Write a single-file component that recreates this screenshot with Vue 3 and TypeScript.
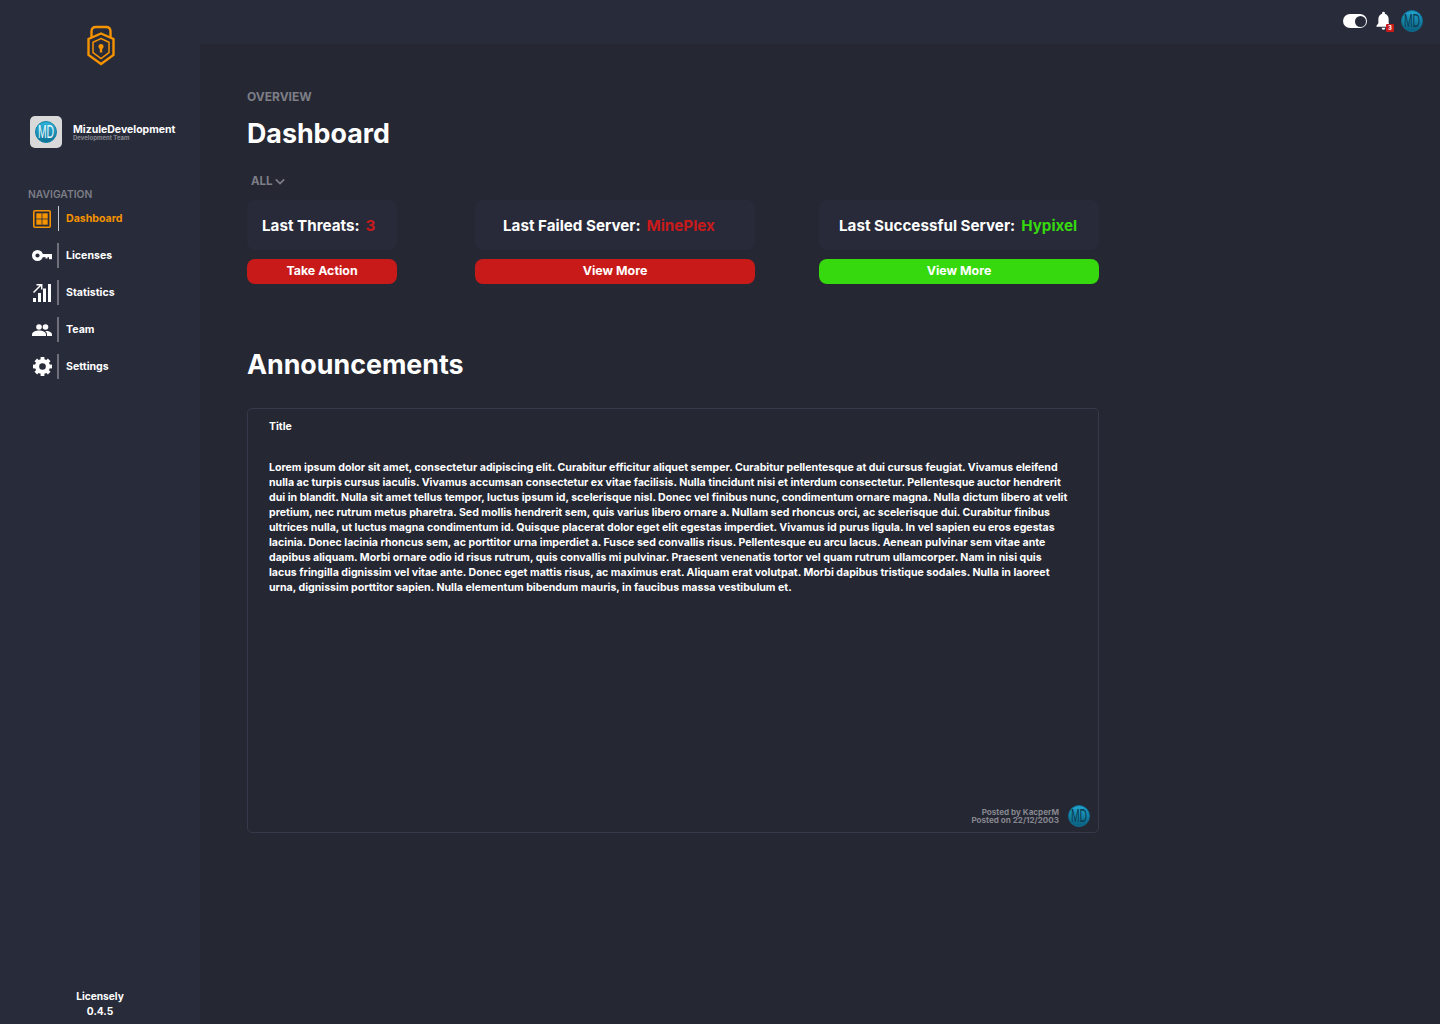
<script setup lang="ts">
interface NavItem {
  label: string
  icon: string
  active?: boolean
}

const navItems: NavItem[] = [
  { label: 'Dashboard', icon: 'grid', active: true },
  { label: 'Licenses', icon: 'key' },
  { label: 'Statistics', icon: 'stats' },
  { label: 'Team', icon: 'team' },
  { label: 'Settings', icon: 'gear' },
]

const stats = [
  { label: 'Last Threats:', value: '3', action: 'Take Action', tone: 'red', width: 150, inset: 15 },
  { label: 'Last Failed Server:', value: 'MinePlex', action: 'View More', tone: 'red', width: 280, inset: 28 },
  { label: 'Last Successful Server:', value: 'Hypixel', action: 'View More', tone: 'green', width: 280, inset: 20 },
]

const gearTeeth = [0, 45, 90, 135, 180, 225, 270, 315]

const loremLines = [
  'Lorem ipsum dolor sit amet, consectetur adipiscing elit. Curabitur efficitur aliquet semper. Curabitur pellentesque at dui cursus feugiat. Vivamus eleifend',
  'nulla ac turpis cursus iaculis. Vivamus accumsan consectetur ex vitae facilisis. Nulla tincidunt nisi et interdum consectetur. Pellentesque auctor hendrerit',
  'dui in blandit. Nulla sit amet tellus tempor, luctus ipsum id, scelerisque nisl. Donec vel finibus nunc, condimentum ornare magna. Nulla dictum libero at velit',
  'pretium, nec rutrum metus pharetra. Sed mollis hendrerit sem, quis varius libero ornare a. Nullam sed rhoncus orci, ac scelerisque dui. Curabitur finibus',
  'ultrices nulla, ut luctus magna condimentum id. Quisque placerat dolor eget elit egestas imperdiet. Vivamus id purus ligula. In vel sapien eu eros egestas',
  'lacinia. Donec lacinia rhoncus sem, ac porttitor urna imperdiet a. Fusce sed convallis risus. Pellentesque eu arcu lacus. Aenean pulvinar sem vitae ante',
  'dapibus aliquam. Morbi ornare odio id risus rutrum, quis convallis mi pulvinar. Praesent venenatis tortor vel quam rutrum ullamcorper. Nam in nisi quis',
  'lacus fringilla dignissim vel vitae ante. Donec eget mattis risus, ac maximus erat. Aliquam erat volutpat. Morbi dapibus tristique sodales. Nulla in laoreet',
  'urna, dignissim porttitor sapien. Nulla elementum bibendum mauris, in faucibus massa vestibulum et.',
]
</script>

<template>
  <div class="shell">
    <aside class="sidebar">
      <div class="logo-wrap">
        <svg class="logo" viewBox="0 0 28 40" fill="none" stroke="#f59300" stroke-width="2.400">
          <path d="M4.500 12V6Q4.500 1.500 9 1.500h10Q23.500 1.500 23.500 6V12" />
          <path d="M14 8 26.500 13.500V29.500L14 38.500 1.500 29.500V13.500Z" />
          <path d="M14 13 22 16.800V27L14 33 6 27V16.800Z" stroke-width="1.500" />
          <circle cx="14" cy="21" r="2.500" fill="#f59300" stroke="none" />
          <rect x="12.800" y="21.500" width="2.400" height="5.500" fill="#f59300" stroke="none" />
        </svg>
      </div>

      <div class="team">
        <div class="team-avatar">
          <svg class="md md-team" viewBox="0 0 22 22">
            <defs>
              <linearGradient id="mdTeam" x1="0" y1="0" x2="0" y2="1">
                <stop offset="0" stop-color="#2fb4dc" />
                <stop offset="1" stop-color="#0c6f92" />
              </linearGradient>
            </defs>
            <circle cx="11" cy="11" r="10.500" fill="url(#mdTeam)" stroke="#1483a8" />
            <text transform="translate(11 17.300) scale(.8 1.35)" text-anchor="middle" class="md-text">MD</text>
          </svg>
        </div>
        <div>
          <div class="team-name">MizuleDevelopment</div>
          <div class="team-sub">Development Team</div>
        </div>
      </div>

      <div class="nav-title">NAVIGATION</div>
      <nav class="nav">
        <a v-for="item in navItems" :key="item.label" class="nav-item" :class="{ active: item.active }">
          <span class="nav-icon">
            <svg v-if="item.icon === 'grid'" viewBox="0 0 18 18" width="18" height="18">
              <rect x=".8" y=".8" width="16.400" height="16.400" rx="1" fill="none" stroke="#f59300" stroke-width="1.600" />
              <rect x="3.300" y="3.300" width="5.300" height="5.300" fill="#f59300" />
              <rect x="9.400" y="3.300" width="5.300" height="5.300" fill="#f59300" />
              <rect x="3.300" y="9.400" width="5.300" height="5.300" fill="#f59300" />
              <rect x="9.400" y="9.400" width="5.300" height="5.300" fill="#f59300" />
            </svg>
            <svg v-else-if="item.icon === 'key'" viewBox="0 0 20 11" width="20" height="11">
              <circle cx="5.500" cy="5.500" r="3.800" fill="none" stroke="#fff" stroke-width="3.400" />
              <rect x="9" y="4" width="11" height="3.200" fill="#fff" />
              <rect x="13.500" y="6" width="2" height="2.500" fill="#fff" />
              <rect x="17" y="6" width="3" height="3.200" fill="#fff" />
            </svg>
            <svg v-else-if="item.icon === 'stats'" viewBox="0 0 18 18" width="18" height="18">
              <rect x="0" y="14" width="3" height="4" fill="#fff" />
              <rect x="5" y="9" width="3" height="9" fill="#fff" />
              <rect x="10" y="4.500" width="3" height="13.500" fill="#fff" />
              <rect x="15" y="0" width="3" height="18" fill="#fff" />
              <path d="M.5 8.500 8 1M3.500 .8H8.700V5.500" stroke="#fff" stroke-width="1.500" fill="none" />
            </svg>
            <svg v-else-if="item.icon === 'team'" viewBox="0 0 20 12" width="20" height="12">
              <circle cx="7" cy="3" r="2.800" fill="#fff" />
              <circle cx="13.500" cy="3" r="2.800" fill="#fff" />
              <path fill="#fff" d="M0 12v-1.500C0 8 4 6.600 7 6.600s7 1.400 7 3.900V12Z" />
              <path fill="#fff" d="M15 12v-1.500c0-1.500-.7-2.700-1.900-3.500 .4 0 .8-.1 1.200-.1 2.800 0 5.700 1.300 5.700 3.600V12Z" />
            </svg>
            <svg v-else viewBox="0 0 20 20" width="19" height="19">
              <circle cx="10" cy="10" r="5.700" fill="none" stroke="#fff" stroke-width="4.400" />
              <rect
                v-for="angle in gearTeeth"
                :key="angle"
                x="8"
                y="0"
                width="4"
                height="4"
                fill="#fff"
                :transform="`rotate(${angle} 10 10)`"
              />
            </svg>
          </span>
          <span class="nav-rule" />
          <span class="nav-label">{{ item.label }}</span>
        </a>
      </nav>

      <div class="version">
        <div>Licensely</div>
        <div>0.4.5</div>
      </div>
    </aside>

    <div class="column">
      <header class="topbar">
        <span class="toggle"><span class="knob" /></span>
        <span class="bell">
          <svg viewBox="0 0 16 20" width="15" height="20">
            <path fill="#fff" d="M8 0a1.500 1.500 0 0 1 1.500 1.500v.8C12 3 13.500 5.200 13.500 8v4.500L15.500 15v1H.5v-1l2-2.500V8c0-2.800 1.500-5 4-5.700v-.8A1.500 1.500 0 0 1 8 0Z" />
            <path fill="#fff" d="M6 17.300h4a2 2 0 0 1-4 0Z" />
          </svg>
          <span class="bell-badge">3</span>
        </span>
        <svg class="md md-top" viewBox="0 0 22 22">
          <defs>
            <linearGradient id="mdTop" x1="0" y1="0" x2="0" y2="1">
              <stop offset="0" stop-color="#22a6d1" />
              <stop offset="1" stop-color="#0a5d7c" />
            </linearGradient>
          </defs>
          <circle cx="11" cy="11" r="10.500" fill="url(#mdTop)" stroke="#0d6f93" />
          <text transform="translate(11 17.300) scale(.8 1.35)" text-anchor="middle" class="md-text dark">MD</text>
        </svg>
      </header>

      <main class="main">
        <div class="eyebrow">OVERVIEW</div>
        <h1 class="heading">Dashboard</h1>

        <div class="filter">
          ALL
          <svg viewBox="0 0 12 8" width="10" height="7" fill="none" stroke="#7d7e86" stroke-width="2">
            <path d="M1 1.500 6 6.500 11 1.500" />
          </svg>
        </div>

        <section class="stats">
          <div v-for="stat in stats" :key="stat.label" class="stat" :style="{ width: stat.width + 'px' }">
            <div class="stat-card" :style="{ paddingLeft: stat.inset + 'px' }">
              <span class="stat-label">{{ stat.label }}</span>
              <span class="stat-value" :class="stat.tone">{{ stat.value }}</span>
            </div>
            <button class="stat-btn" :class="stat.tone">{{ stat.action }}</button>
          </div>
        </section>

        <h2 class="heading announce">Announcements</h2>

        <article class="panel">
          <div class="panel-title">Title</div>
          <p class="panel-body">
            <span v-for="line in loremLines" :key="line" class="line">{{ line }}</span>
          </p>
          <footer class="panel-foot">
            <div class="posted">
              <div>Posted by KacperM</div>
              <div>Posted on 22/12/2003</div>
            </div>
            <svg class="md md-foot" viewBox="0 0 22 22">
              <defs>
                <linearGradient id="mdFoot" x1="0" y1="0" x2="0" y2="1">
                  <stop offset="0" stop-color="#22a6d1" />
                  <stop offset="1" stop-color="#0a5d7c" />
                </linearGradient>
              </defs>
              <circle cx="11" cy="11" r="10.500" fill="url(#mdFoot)" stroke="#0d6f93" />
              <text transform="translate(11 17.300) scale(.8 1.35)" text-anchor="middle" class="md-text dark">MD</text>
            </svg>
          </footer>
        </article>
      </main>
    </div>
  </div>
</template>

<style>
html,
body {
  margin: 0;
  background: #282b3a;
}
</style>

<style scoped>
.shell {
  display: flex;
  height: 1024px;
  overflow: hidden;
  background: #282b3a;
  color: #fff;
  font-family: Inter, "Open Sans", sans-serif;
  font-weight: 700;
}

.sidebar {
  display: flex;
  flex-direction: column;
  flex: 0 0 200px;
  width: 200px;
}

.logo-wrap {
  display: flex;
  justify-content: center;
  padding: 25px 0 0 2px;
  height: 91px;
}

.logo {
  width: 28px;
  height: 41px;
}

.team {
  display: flex;
  align-items: center;
  gap: 11px;
  margin: 0 0 0 30px;
  height: 32px;
}

.team-avatar {
  display: flex;
  align-items: center;
  justify-content: center;
  width: 32px;
  height: 32px;
  border-radius: 5px;
  background: #d9d9d9;
}

.md {
  display: block;
  overflow: visible;
}

.md-team {
  width: 22px;
  height: 22px;
}

.md-text {
  font-family: "Liberation Sans", sans-serif;
  font-size: 13px;
  font-weight: 400;
  fill: #e6f7fc;
}

.md-text.dark {
  fill: #0b3c52;
}

.team-name {
  font-size: 10.500px;
  line-height: 11px;
  white-space: nowrap;
}

.team-sub {
  font-size: 6px;
  line-height: 6px;
  color: #85868e;
  white-space: nowrap;
}

.nav-title {
  margin: 40px 0 0 28px;
  font-size: 10.300px;
  line-height: 12px;
  font-weight: 600;
  color: #7d7e86;
}

.nav {
  display: flex;
  flex-direction: column;
  gap: 12px;
  margin-top: 6px;
}

.nav-item {
  display: flex;
  align-items: center;
  height: 25px;
  color: #fff;
  font-size: 10.600px;
}

.nav-item.active {
  color: #f59300;
}

.nav-icon {
  display: flex;
  align-items: center;
  justify-content: center;
  width: 22px;
  margin-left: 31px;
}

.nav-rule {
  width: 2px;
  height: 25px;
  margin: 0 7px 0 4px;
  background: #6f7079;
}

.nav-item.active .nav-rule {
  width: 1px;
  margin-left: 5px;
  background: #c8c9ce;
}

.version {
  margin-top: auto;
  padding-bottom: 5px;
  font-size: 10.200px;
  line-height: 15px;
  text-align: center;
}

.column {
  display: flex;
  flex-direction: column;
  flex: 1;
  min-width: 0;
}

.topbar {
  display: flex;
  align-items: center;
  justify-content: flex-end;
  flex: 0 0 44px;
  padding: 0 17px 2px 0;
  box-sizing: border-box;
}

.toggle {
  position: relative;
  display: block;
  width: 24px;
  height: 14px;
  border-radius: 7px;
  background: #fff;
  margin-right: 9px;
}

.knob {
  position: absolute;
  top: 1.500px;
  right: 1.500px;
  width: 11px;
  height: 11px;
  border-radius: 50%;
  background: #282b3a;
}

.bell {
  position: relative;
  display: block;
  width: 16px;
  height: 20px;
  margin-right: 9px;
}

.bell-badge {
  position: absolute;
  right: -2px;
  bottom: -1px;
  width: 8px;
  height: 8px;
  border-radius: 1px;
  background: #c91a1a;
  font-size: 6px;
  line-height: 8px;
  text-align: center;
}

.md-top {
  width: 22px;
  height: 22px;
}

.main {
  flex: 1;
  padding: 46px 0 0 47px;
  background: #252733;
}

.eyebrow {
  font-size: 12px;
  line-height: 14px;
  font-weight: 700;
  color: #7d7e86;
}

.heading {
  margin: 0;
  font-size: 26.800px;
  line-height: 32px;
  font-weight: 700;
}

h1.heading {
  margin-top: 13px;
}

.filter {
  display: flex;
  align-items: center;
  gap: 2px;
  margin: 24px 0 0 4px;
  height: 16px;
  font-size: 11.500px;
  color: #7d7e86;
}

.stats {
  display: flex;
  gap: 64px;
  margin-top: 11px;
  width: 852px;
}

.stats .stat:first-child {
  margin-right: 14px;
}

.stat-card {
  display: flex;
  align-items: center;
  gap: 6px;
  height: 50px;
  border-radius: 8px;
  background: #282a3a;
  font-size: 15.200px;
  white-space: nowrap;
}

.stat-value.red {
  color: #c91a1a;
}

.stat-value.green {
  color: #36d90d;
}

.stat-btn {
  display: block;
  width: 100%;
  height: 25px;
  margin-top: 9px;
  padding: 0 0 2px;
  border: 0;
  border-radius: 8px;
  color: #fff;
  font: inherit;
  font-size: 12.400px;
}

.stat-btn.red {
  background: #c91a1a;
}

.stat-btn.green {
  background: #36d90d;
}

.announce {
  margin-top: 64px;
}

.panel {
  position: relative;
  box-sizing: border-box;
  width: 852px;
  height: 425px;
  margin-top: 28px;
  padding: 11px 21px;
  border: 1px solid #363949;
  border-radius: 5px;
}

.panel-title {
  font-size: 10.500px;
  line-height: 14px;
}

.panel-body {
  margin: 26px 0 0;
  font-size: 10.600px;
  line-height: 15px;
}

.line {
  display: block;
  white-space: nowrap;
}

.panel-foot {
  position: absolute;
  right: 8px;
  bottom: 5px;
  display: flex;
  align-items: center;
  gap: 9px;
}

.posted {
  font-size: 8.100px;
  line-height: 8px;
  color: #85868e;
  text-align: right;
}

.md-foot {
  width: 22px;
  height: 22px;
}
</style>
